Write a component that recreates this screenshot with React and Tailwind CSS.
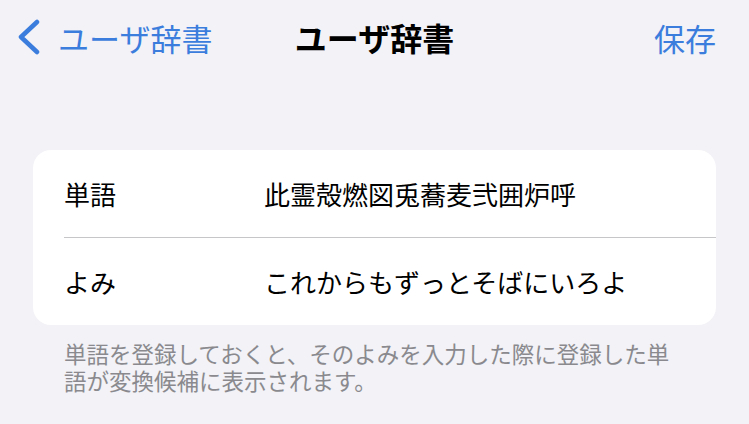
const BLUE = 'text-[#3b7ddd]';

const BackChevron = () => (
  <svg width="26" height="36" viewBox="0 0 26 36" fill="none" className="shrink-0">
    <polyline
      points="21,3 5,18 21,33"
      stroke="#3b7ddd"
      strokeWidth="4.5"
      strokeLinecap="round"
      strokeLinejoin="round"
    />
  </svg>
);

const Row = ({ label, value }) => (
  <div className="flex items-center h-[87px] pl-[31px] pr-4">
    <span className="w-[200px] shrink-0 text-[26px] leading-none text-black">{label}</span>
    <span className="text-[26px] leading-none text-black whitespace-nowrap">{value}</span>
  </div>
);

export default function App() {
  return (
    <div
      className="w-[749px] h-[424px] overflow-hidden bg-[#f2f2f7]"
      style={{ fontFamily: '"Noto Sans CJK JP", "Noto Sans", sans-serif' }}
    >
      {/* nav bar */}
      <div className="grid grid-cols-[1fr_auto_1fr] items-center h-[74px] px-[16px]">
        <div className="flex items-center gap-[16px]">
          <BackChevron />
          <span className={`text-[31px] leading-none ${BLUE}`}>ユーザ辞書</span>
        </div>
        <span className="text-[32px] leading-none font-bold text-black">ユーザ辞書</span>
        <span className={`justify-self-end mr-[17px] text-[31px] leading-none ${BLUE}`}>保存</span>
      </div>

      {/* word card */}
      <div className="mx-[33px] mt-[76px] bg-white rounded-[18px] overflow-hidden">
        <Row label="単語" value="此霊殻燃図兎蕎麦弐囲炉呼" />
        <div className="ml-[31px] border-t border-[#c6c6c8]" />
        <Row label="よみ" value="これからもずっとそばにいろよ" />
      </div>

      <p className="mt-[15px] pl-[64px] pr-[62px] text-[22.5px] leading-[27px] text-[#8a8a8e]">
        単語を登録しておくと、そのよみを入力した際に登録した単語が変換候補に表示されます。
      </p>
    </div>
  );
}
